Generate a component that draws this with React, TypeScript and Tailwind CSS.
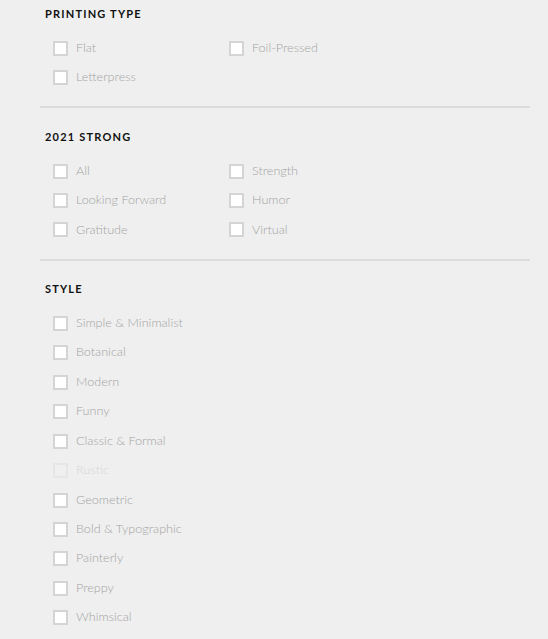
import React from 'react';

type Option = { label: string; disabled?: boolean };

const SECTIONS: { title: string; cols: 1 | 2; options: Option[] }[] = [
  {
    title: 'Printing Type',
    cols: 2,
    options: [{ label: 'Flat' }, { label: 'Foil-Pressed' }, { label: 'Letterpress' }],
  },
  {
    title: '2021 Strong',
    cols: 2,
    options: [
      { label: 'All' },
      { label: 'Strength' },
      { label: 'Looking Forward' },
      { label: 'Humor' },
      { label: 'Gratitude' },
      { label: 'Virtual' },
    ],
  },
  {
    title: 'Style',
    cols: 1,
    options: [
      { label: 'Simple & Minimalist' },
      { label: 'Botanical' },
      { label: 'Modern' },
      { label: 'Funny' },
      { label: 'Classic & Formal' },
      { label: 'Rustic', disabled: true },
      { label: 'Geometric' },
      { label: 'Bold & Typographic' },
      { label: 'Painterly' },
      { label: 'Preppy' },
      { label: 'Whimsical' },
    ],
  },
];

function Checkbox({ label, disabled }: Option) {
  return (
    <label className="flex h-[29.45px] items-center gap-[8px]">
      <span
        className={`h-[15px] w-[15px] shrink-0 border-2 ${
          disabled ? 'border-[#e6e6e6] bg-[#efefef]' : 'border-[#d4d4d4] bg-white'
        }`}
      />
      <span className={`text-[12.6px] font-light ${disabled ? 'text-[#d6d6d6]' : 'text-[#a4a4a4]'}`}>{label}</span>
    </label>
  );
}

export default function App() {
  return (
    <div className="min-h-screen bg-[#efefef] pl-[40px] pr-[18px] pt-[7px]" style={{ fontFamily: 'Lato, "Noto Sans", sans-serif' }}>
      {SECTIONS.map((section, i) => (
        <div key={section.title} className={i < SECTIONS.length - 1 ? 'border-b-2 border-[#dcdcdc] pb-[14px]' : ''}>
          <h3 className={`pl-[5px] text-[11px] font-bold uppercase leading-[13px] tracking-[1.2px] text-[#111] ${i === 0 ? '' : 'pt-[21.5px]'}`}>
            {section.title}
          </h3>
          <div className={`mt-[13.5px] grid pl-[13px] ${section.cols === 2 ? 'grid-cols-[176px_1fr]' : 'grid-cols-1'}`}>
            {section.options.map((o) => (
              <Checkbox key={o.label} {...o} />
            ))}
          </div>
        </div>
      ))}
    </div>
  );
}
